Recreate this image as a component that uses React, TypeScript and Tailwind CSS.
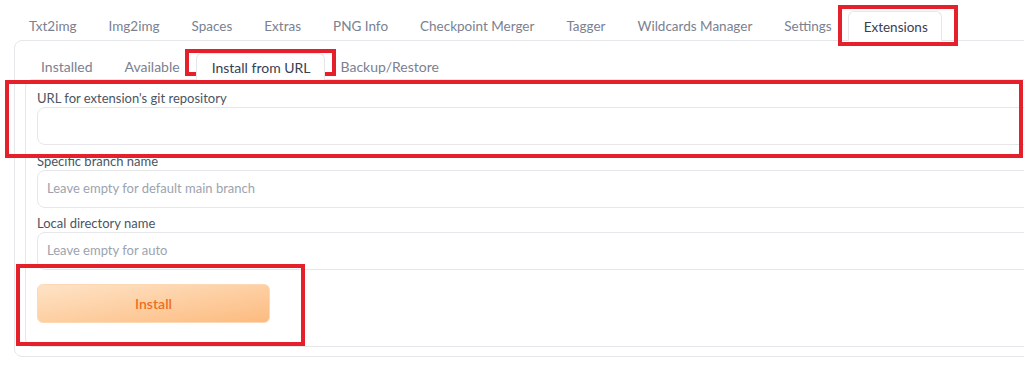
const topTabs = [
  "Txt2img",
  "Img2img",
  "Spaces",
  "Extras",
  "PNG Info",
  "Checkpoint Merger",
  "Tagger",
  "Wildcards Manager",
  "Settings",
  "Extensions",
]

const subTabs = ["Installed", "Available", "Install from URL", "Backup/Restore"]

function Field({ label, placeholder }: { label: string; placeholder?: string }) {
  return (
    <div className="flex flex-col">
      <label className="h-[18px] text-[13px] leading-[18px] text-[#4b5563]">{label}</label>
      <div className="flex h-[38px] w-[1100px] items-center rounded-lg border border-[#e5e7eb] bg-white px-[9px] text-[13px] text-[#9ca3af]">
        {placeholder}
      </div>
    </div>
  )
}

export default function App() {
  return (
    <div className="relative h-[368px] w-[1024px] overflow-hidden bg-white font-['Lato',sans-serif]">
      <div className="pl-[13px] pt-[11px]">
        <nav className="flex h-[29px]">
          {topTabs.map((t) =>
            t === "Extensions" ? (
              <div
                key={t}
                className="relative z-10 flex h-[30px] items-center rounded-t-md border border-b-0 border-[#e5e7eb] bg-white pl-[15px] pr-[13px] pt-px text-[13.5px] text-[#374151]"
              >
                {t}
              </div>
            ) : (
              <div key={t} className="flex h-[29px] items-center px-4 pt-px text-[13.5px] text-[#7b8190]">
                {t}
              </div>
            )
          )}
        </nav>

        <div className="ml-px h-[317px] w-[1100px] rounded-lg border border-[#e5e7eb] pl-[10px] pt-[12px]">
          <nav className="flex h-[26px]">
            {subTabs.map((t) =>
              t === "Install from URL" ? (
                <div
                  key={t}
                  className="relative z-10 flex h-[27px] items-center rounded-t-md border border-b-0 border-[#e5e7eb] bg-white pl-[15px] pr-[13px] text-[14px] text-[#374151]"
                >
                  {t}
                </div>
              ) : (
                <div key={t} className="flex h-[26px] items-center px-4 text-[14px] text-[#7b8190]">
                  {t}
                </div>
              )
            )}
          </nav>

          <div className="h-[268px] rounded-lg border border-[#e5e7eb] pl-[11px] pt-[9px]">
            <div className="flex flex-col gap-[6.5px]">
              <Field label="URL for extension's git repository" />
              <Field label="Specific branch name" placeholder="Leave empty for default main branch" />
              <Field label="Local directory name" placeholder="Leave empty for auto" />
            </div>
            <button className="mt-[14px] h-[39px] w-[233px] rounded-md border border-[#fcd9b4] bg-linear-to-br from-[#fee3c6] to-[#fcbb7f] text-[14px] font-semibold text-[#f06d20]">
              Install
            </button>
          </div>
        </div>
      </div>

      {/* annotation boxes drawn over the screenshot */}
      <div className="pointer-events-none absolute left-[838px] top-[5px] h-[41px] w-[120px] border-4 border-[#e5202b]" />
      <div className="pointer-events-none absolute left-[185px] top-[49px] h-[27px] w-[151px] border-4 border-[#e5202b]" />
      <div className="pointer-events-none absolute left-[5px] top-[80px] h-[78px] w-[1018px] border-4 border-[#e5202b]" />
      <div className="pointer-events-none absolute left-[16px] top-[264px] h-[82px] w-[289px] border-4 border-[#e5202b]" />
    </div>
  )
}
